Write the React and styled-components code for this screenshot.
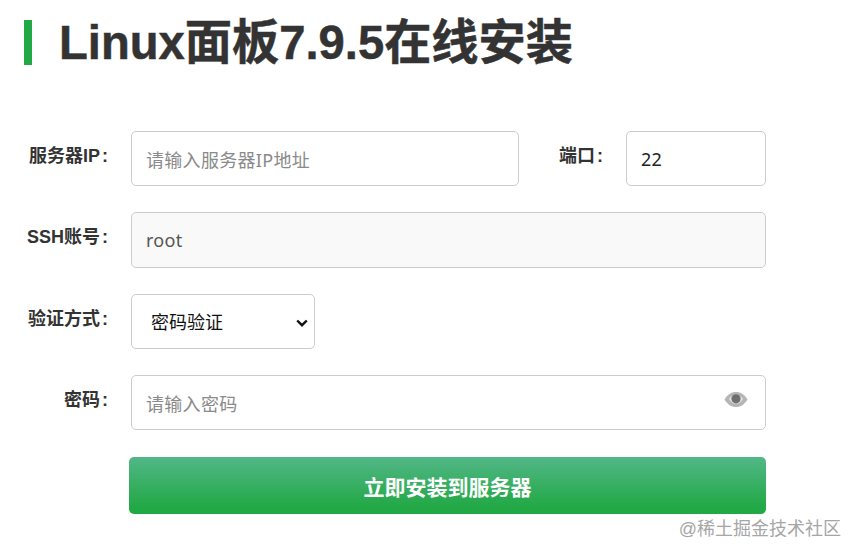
import React from "react"
import styled, { createGlobalStyle } from "styled-components"

const green = "#22a845"
const sans = `"Liberation Sans", "Noto Sans CJK SC", sans-serif`
const fieldFont = `"Noto Sans", "Noto Sans CJK SC", sans-serif`

const GlobalStyle = createGlobalStyle`
  html, body {
    margin: 0;
    background: #fff;
    overflow: hidden;
  }
`

const Page = styled.div`
  position: relative;
  width: 858px;
  height: 555px;
  padding: 20px 92px 0 24px;
  box-sizing: border-box;
  font-family: ${sans};
`

const Title = styled.h1`
  margin: 0 0 66px;
  height: 45px;
  padding-left: 27px;
  border-left: 8px solid ${green};
  font-size: 47.2px;
  line-height: 45px;
  font-weight: 700;
  color: #333;
  white-space: nowrap;
  -webkit-text-stroke: 0.5px #333;
`

const Form = styled.form`
  display: flex;
  flex-direction: column;
  gap: 26px;
`

const Row = styled.div`
  display: flex;
  align-items: flex-start;
  height: ${p => p.$height || 55}px;
`

const Label = styled.label`
  flex: none;
  width: 84px;
  margin-right: 23px;
  padding-top: 13px;
  font-size: 18px;
  line-height: 24px;
  font-weight: 700;
  color: #333;
  text-align: right;
  white-space: nowrap;

  &::after {
    content: ":";
    margin-left: 2px;
  }
`

const Input = styled.input`
  flex: ${p => (p.$width ? "none" : 1)};
  width: ${p => (p.$width ? `${p.$width}px` : "auto")};
  min-width: 0;
  height: 100%;
  box-sizing: border-box;
  padding: ${p => p.$top ?? 3}px 14px 0;
  border: 1px solid #ccc;
  border-radius: 5px;
  outline: none;
  background: ${p => (p.readOnly ? "#f9f9f9" : "#fff")};
  color: ${p => (p.readOnly ? "#555" : "#222")};
  font-family: ${fieldFont};
  font-size: 18px;
  letter-spacing: 0.3px;

  &::placeholder {
    color: #8a8a8a;
    opacity: 1;
  }
`

const SelectField = styled.div`
  position: relative;
  width: 184px;
  height: 100%;
`

const Select = styled.select`
  appearance: none;
  display: block;
  width: 100%;
  height: 100%;
  box-sizing: border-box;
  padding: 0 14px 0 19px;
  border: 1px solid #ccc;
  border-radius: 5px;
  outline: none;
  background: #fff;
  color: #111;
  font-family: ${fieldFont};
  font-size: 18px;
`

const Chevron = styled.svg`
  position: absolute;
  top: 25px;
  right: 7px;
  pointer-events: none;
`

const PasswordField = styled.div`
  position: relative;
  flex: 1;
  display: flex;
  height: 100%;
`

const EyeIcon = styled.svg`
  position: absolute;
  top: 16px;
  right: 18px;
`

const SubmitRow = styled.div`
  margin: 1px 0 0 105px;
`

const SubmitButton = styled.button`
  display: block;
  width: 100%;
  height: 57px;
  padding: 0;
  border: 0;
  border-radius: 5px;
  background: linear-gradient(180deg, #52b788 0%, #22a845 88%);
  color: #fff;
  font-family: ${sans};
  font-size: 21px;
  font-weight: 700;
`

const Watermark = styled.div`
  position: absolute;
  right: 17px;
  bottom: 16px;
  font-size: 18px;
  line-height: 20px;
  color: #a6a6a6;
  white-space: nowrap;
`

const App = () => (
  <Page>
    <GlobalStyle />
    <Title>Linux面板7.9.5在线安装</Title>
    <Form>
      <Row>
        <Label>服务器IP</Label>
        <Input placeholder="请输入服务器IP地址" $width={388} />
        <Label>端口</Label>
        <Input defaultValue="22" $width={140} $top={1} />
      </Row>
      <Row $height={56}>
        <Label>SSH账号</Label>
        <Input value="root" readOnly $top={0} />
      </Row>
      <Row>
        <Label>验证方式</Label>
        <SelectField>
          <Select defaultValue="password">
            <option value="password">密码验证</option>
            <option value="key">私钥验证</option>
          </Select>
          <Chevron width="12" height="8" viewBox="0 0 12 8" fill="none">
            <path d="M1.200 1.500 6 6.200l4.800-4.700" stroke="#111" strokeWidth="2.400" />
          </Chevron>
        </SelectField>
      </Row>
      <Row>
        <Label>密码</Label>
        <PasswordField>
          <Input type="password" placeholder="请输入密码" />
          <EyeIcon width="24" height="17" viewBox="0 0 24 17">
            <path d="M0.500 8.500C3.500 3.500 7.300 1 12 1s8.500 2.500 11.500 7.500C20.500 13.500 16.700 16 12 16S3.500 13.500 0.500 8.500z" fill="#b5b5b5" />
            <path d="M5 8c1.800-2.500 4-4 7-4s5.200 1.500 7 4c-1.800 3-4 4.700-7 4.700S6.800 11 5 8z" fill="#e2e2e2" />
            <circle cx="12" cy="7.800" r="4.600" fill="#6f6f6f" />
          </EyeIcon>
        </PasswordField>
      </Row>
      <SubmitRow>
        <SubmitButton type="button">立即安装到服务器</SubmitButton>
      </SubmitRow>
    </Form>
    <Watermark>@稀土掘金技术社区</Watermark>
  </Page>
)

export default App
